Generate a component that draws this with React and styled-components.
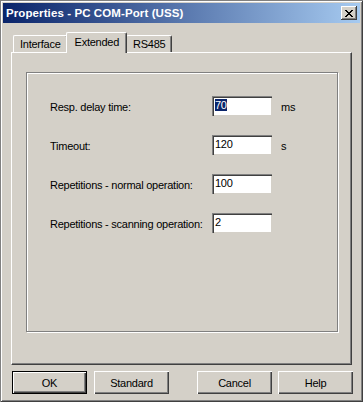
import React from "react";
import styled, { createGlobalStyle } from "styled-components";

const Global = createGlobalStyle`
  html, body {
    margin: 0;
    padding: 0;
    background: #d4d0c8;
  }
  * {
    box-sizing: border-box;
  }
`;

const Window = styled.div`
  width: 363px;
  height: 402px;
  background: #d4d0c8;
  padding: 3px;
  font-family: "Liberation Sans", Arial, sans-serif;
  font-size: 11px;
  letter-spacing: -0.25px;
  color: #000;
  box-shadow: inset 1px 1px #808080, inset -1px -1px #404040,
    inset 2px 2px #ffffff, inset -2px -2px #808080;
  display: flex;
  flex-direction: column;
`;

const TitleBar = styled.div`
  height: 20px;
  background: linear-gradient(to right, #0a246a, #a6caf0);
  display: flex;
  align-items: center;
  justify-content: space-between;
  padding: 0 3px 0 3px;
`;

const Title = styled.div`
  color: #fff;
  font-weight: bold;
  font-size: 11.5px;
  letter-spacing: 0.1px;
`;

const CloseButton = styled.div`
  width: 16px;
  height: 14px;
  background: #d4d0c8;
  box-shadow: inset -1px -1px #404040, inset 1px 1px #fff,
    inset -2px -2px #808080;
  display: flex;
  align-items: center;
  justify-content: center;
`;

const Body = styled.div`
  flex: 1;
  display: flex;
  flex-direction: column;
  padding: 9px 8px 0 8px;
`;

const TabRow = styled.div`
  display: flex;
  align-items: flex-end;
  height: 20px;
  padding-left: 2px;
  position: relative;
  z-index: 1;
`;

const Tab = styled.div`
  height: ${(p) => (p.active ? "21px" : "17px")};
  margin: ${(p) => (p.active ? "0 -1px -1px -2px" : "0")};
  padding: ${(p) => (p.active ? "3px 7px 0 8px" : "2px 6px 0 6px")};
  background: #d4d0c8;
  border-top: 1px solid #fff;
  border-left: 1px solid #fff;
  border-right: 1px solid #404040;
  box-shadow: inset -1px 0 #808080;
  border-radius: 2px 2px 0 0;
  white-space: nowrap;
  position: relative;
  z-index: ${(p) => (p.active ? 2 : 1)};
`;

const Panel = styled.div`
  height: 313px;
  border-top: 1px solid #fff;
  border-left: 1px solid #fff;
  border-right: 1px solid #404040;
  border-bottom: 1px solid #404040;
  box-shadow: inset -1px -1px #808080;
  padding: 19px 13px 0 14px;
`;

const Group = styled.div`
  height: 260px;
  border: 1px solid #808080;
  box-shadow: inset 1px 1px #fff, 1px 1px #fff;
  padding: 23px 0 0 23px;
  display: grid;
  grid-template-columns: 153px 60px auto;
  grid-auto-rows: 20px;
  row-gap: 19px;
  column-gap: 9px;
  align-content: start;
  align-items: center;
`;

const Label = styled.div`
  white-space: nowrap;
  padding-top: 1px;
`;

const Input = styled.div`
  height: 20px;
  background: #fff;
  box-shadow: inset 1px 1px #808080, inset 2px 2px #404040,
    inset -1px -1px #d4d0c8;
  padding: 3px 0 0 3px;
  line-height: 13px;
`;

const Selected = styled.span`
  background: #0a246a;
  color: #fff;
`;

const Unit = styled.div`
  padding-top: 1px;
`;

const ButtonRow = styled.div`
  display: flex;
  justify-content: space-between;
  padding: 6px 0 0 1px;
  margin-right: -1px;
`;

const ButtonGroup = styled.div`
  display: flex;
  gap: ${(p) => p.gap}px;
`;

const Button = styled.div`
  width: 75px;
  height: 23px;
  display: flex;
  align-items: center;
  justify-content: center;
  background: #d4d0c8;
  border: ${(p) => (p.primary ? "1px solid #000" : "none")};
  box-shadow: inset 1px 1px #fff, inset -1px -1px #404040,
    inset -2px -2px #808080;
`;

const rows = [
  { label: "Resp. delay time:", value: "70", unit: "ms", selected: true },
  { label: "Timeout:", value: "120", unit: "s" },
  { label: "Repetitions - normal operation:", value: "100" },
  { label: "Repetitions - scanning operation:", value: "2" },
];

export default function App() {
  return (
    <>
      <Global />
      <Window>
        <TitleBar>
          <Title>Properties - PC COM-Port (USS)</Title>
          <CloseButton>
            <svg width="8" height="7" viewBox="0 0 8 7">
              <path d="M0 0 L7 7 M1 0 L8 7 M7 0 L0 7 M8 0 L1 7" stroke="#000" strokeWidth="1" />
            </svg>
          </CloseButton>
        </TitleBar>
        <Body>
          <TabRow>
            <Tab>Interface</Tab>
            <Tab active>Extended</Tab>
            <Tab>RS485</Tab>
          </TabRow>
          <Panel>
            <Group>
              {rows.map((r) => (
                <React.Fragment key={r.label}>
                  <Label>{r.label}</Label>
                  <Input>{r.selected ? <Selected>{r.value}</Selected> : r.value}</Input>
                  <Unit>{r.unit || ""}</Unit>
                </React.Fragment>
              ))}
            </Group>
          </Panel>
          <ButtonRow>
            <ButtonGroup gap={7}>
              <Button primary>OK</Button>
              <Button>Standard</Button>
            </ButtonGroup>
            <ButtonGroup gap={6}>
              <Button>Cancel</Button>
              <Button>Help</Button>
            </ButtonGroup>
          </ButtonRow>
        </Body>
      </Window>
    </>
  );
}
